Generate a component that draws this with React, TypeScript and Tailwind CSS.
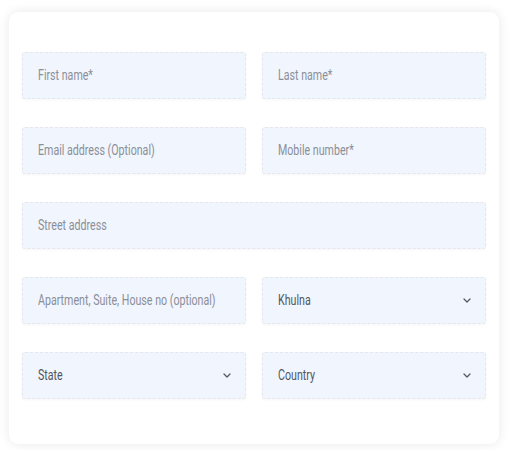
import React from "react";

function Label({ text, dark }: { text: string; dark?: boolean }) {
  return (
    <span
      className={`inline-block origin-left scale-x-[0.71] whitespace-nowrap text-[15px] ${dark ? "text-[#52555e]" : "text-[#8b8f98]"}`}
      style={{ fontFamily: "Roboto, 'Liberation Sans', sans-serif" }}
    >
      {text}
    </span>
  );
}

function Field({ text, select, dark, full }: { text: string; select?: boolean; dark?: boolean; full?: boolean }) {
  return (
    <div
      className={`flex h-[47px] items-center justify-between rounded-[3px] border border-dashed border-[#e6e7ec] bg-[#f1f5fe] pl-[15px] pr-[13px] shadow-[0_1px_3px_rgba(0,0,0,0.04)] ${full ? "col-span-2" : ""}`}
    >
      <Label text={text} dark={dark} />
      {select && (
        <svg width="8" height="5" viewBox="0 0 8 5" fill="none" className="mr-[1px]">
          <path d="M1 1l3 3 3-3" stroke="#555964" strokeWidth="1.3" strokeLinecap="round" strokeLinejoin="round" />
        </svg>
      )}
    </div>
  );
}

export default function App() {
  return (
    <div className="h-[450px] w-[511px] bg-white pl-[9px] pt-[12px]">
      <div className="w-[490px] rounded-[9px] bg-white px-[13px] pb-[45px] pt-[40px] shadow-[0_0_12px_rgba(0,0,0,0.09)]">
        <div className="grid grid-cols-2 gap-x-[16px] gap-y-[28px]">
          <Field text="First name*" />
          <Field text="Last name*" />
          <Field text="Email address (Optional)" />
          <Field text="Mobile number*" />
          <Field text="Street address" full />
          <Field text="Apartment, Suite, House no (optional)" />
          <Field text="Khulna" select dark />
          <Field text="State" select dark />
          <Field text="Country" select dark />
        </div>
      </div>
    </div>
  );
}
